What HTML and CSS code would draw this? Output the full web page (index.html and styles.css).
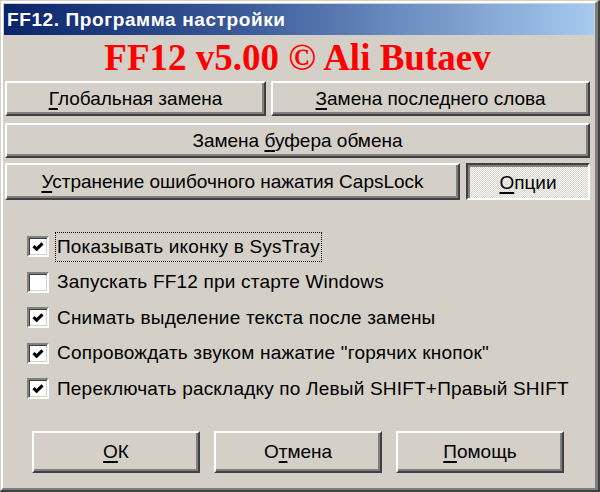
FILE: index.html
```html
<!DOCTYPE html>
<html lang="ru">
<head>
<meta charset="utf-8">
<title>FF12. Программа настройки</title>
<link rel="stylesheet" href="styles.css">
</head>
<body>
<div class="window">
  <div class="frame">
    <div class="titlebar"><span class="title">FF12. Программа настройки</span></div>
    <div class="body">
      <h1 class="brand">FF12 v5.00 © Ali Butaev</h1>
      <div class="btn-row row1">
        <button class="btn w-global"><u>Г</u>лобальная замена</button>
        <button class="btn grow"><u>З</u>амена последнего слова</button>
      </div>
      <div class="btn-row row2">
        <button class="btn grow">Замена <u>б</u>уфера обмена</button>
      </div>
      <div class="btn-row row3">
        <button class="btn w-caps"><u>У</u>странение ошибочного нажатия CapsLock</button>
        <button class="btn pressed grow"><u>О</u>пции</button>
      </div>
      <div class="options">
        <label class="opt"><span class="box checked"><svg viewBox="0 0 13 10" class="tick"><path d="M1.5 4.5 L5 8 L11.5 1.5" /></svg></span><span class="label focus">Показывать иконку в SysTray</span></label>
        <label class="opt"><span class="box"></span><span class="label">Запускать FF12 при старте Windows</span></label>
        <label class="opt"><span class="box checked"><svg viewBox="0 0 13 10" class="tick"><path d="M1.5 4.5 L5 8 L11.5 1.5" /></svg></span><span class="label">Снимать выделение текста после замены</span></label>
        <label class="opt"><span class="box checked"><svg viewBox="0 0 13 10" class="tick"><path d="M1.5 4.5 L5 8 L11.5 1.5" /></svg></span><span class="label">Сопровождать звуком нажатие "горячих кнопок"</span></label>
        <label class="opt"><span class="box checked"><svg viewBox="0 0 13 10" class="tick"><path d="M1.5 4.5 L5 8 L11.5 1.5" /></svg></span><span class="label">Переключать раскладку по Левый SHIFT+Правый SHIFT</span></label>
      </div>
      <div class="footer">
        <button class="btn foot"><u>О</u>К</button>
        <button class="btn foot">О<u>т</u>мена</button>
        <button class="btn foot"><u>П</u>омощь</button>
      </div>
    </div>
  </div>
</div>
</body>
</html>
```

FILE: styles.css
```css
html, body {
  margin: 0;
  padding: 0;
  background: #d4d0c8;
}

.window {
  width: 600px;
  height: 492px;
  box-sizing: border-box;
  border-style: solid;
  border-width: 1px 2px 2px 1px;
  border-color: #d4d0c8 #404040 #404040 #d4d0c8;
  background: #d4d0c8;
  font-family: "Liberation Sans", Arial, sans-serif;
}

.frame {
  height: 100%;
  box-sizing: border-box;
  border-style: solid;
  border-width: 2px 3px 2px 2px;
  border-color: #ffffff #7c7c7c #7c7c7c #ffffff;
  padding: 1px 1px 0 1px;
  display: flex;
  flex-direction: column;
}

.titlebar {
  height: 31px;
  flex: none;
  background: linear-gradient(to right, #0a246a 0%, #3a5a98 40%, #a6caf0 100%);
  display: flex;
  align-items: center;
  padding-left: 3px;
}

.title {
  color: #ffffff;
  font-weight: bold;
  font-size: 19px;
  letter-spacing: 0.6px;
  line-height: 1;
}

.body {
  padding: 0 4px 0 1px;
  display: flex;
  flex-direction: column;
}

.brand {
  margin: 0;
  height: 46px;
  line-height: 46px;
  text-align: center;
  font-family: "Liberation Serif", "Times New Roman", serif;
  font-weight: bold;
  font-size: 37px;
  color: #ff0000;
}

.btn-row {
  display: flex;
  gap: 5px;
}

.row1 { height: 35px; }
.row2 { height: 35px; margin-top: 7px; }
.row3 { height: 37px; margin-top: 5px; gap: 6px; }

.btn {
  box-sizing: border-box;
  margin: 0;
  padding: 0;
  height: 100%;
  background: #d4d0c8;
  border-style: solid;
  border-width: 2px 2px 2px 2px;
  border-color: #ffffff #404040 #404040 #ffffff;
  box-shadow: inset -2px -2px 0 #808080;
  font-family: "Liberation Sans", Arial, sans-serif;
  font-size: 19px;
  color: #000;
  text-align: center;
  line-height: 1;
}

.btn u {
  text-decoration-thickness: 2px;
  text-underline-offset: 3px;
}

.w-global { width: 261px; flex: none; }
.w-caps { width: 455px; flex: none; }
.grow { flex: 1; }

.pressed {
  border-color: #404040 #ffffff #ffffff #404040;
  box-shadow: inset 2px 2px 0 #808080;
  background-color: #d4d0c8;
  background-image: repeating-conic-gradient(#ffffff 0 25%, #d4d0c8 0 50%);
  background-size: 2px 2px;
  padding-top: 2px;
}

.options {
  margin-top: 29px;
  padding-left: 22px;
  display: flex;
  flex-direction: column;
}

.opt {
  height: 35.5px;
  display: flex;
  align-items: center;
  gap: 9px;
  font-size: 19px;
  letter-spacing: 0.2px;
  color: #000;
}

.box {
  width: 22px;
  height: 21px;
  box-sizing: border-box;
  flex: none;
  background: #ffffff;
  border-style: solid;
  border-width: 2px;
  border-color: #808080 #ffffff #ffffff #808080;
  box-shadow: inset 1px 1px 0 #404040, inset -1px -1px 0 #d4d0c8;
  display: flex;
  align-items: center;
  justify-content: center;
}

.tick {
  width: 12px;
  height: 9px;
}

.tick path {
  fill: none;
  stroke: #000;
  stroke-width: 3.4;
}

.label {
  line-height: 1;
  padding: 4px 1px 5px 1px;
  margin-left: -2px;
}

.focus {
  outline: 1px dotted #000;
  outline-offset: 0;
}

.footer {
  margin-top: 24px;
  padding-left: 27px;
  display: flex;
  gap: 14px;
  height: 42px;
}

.foot {
  width: 168px;
  flex: none;
}
```
